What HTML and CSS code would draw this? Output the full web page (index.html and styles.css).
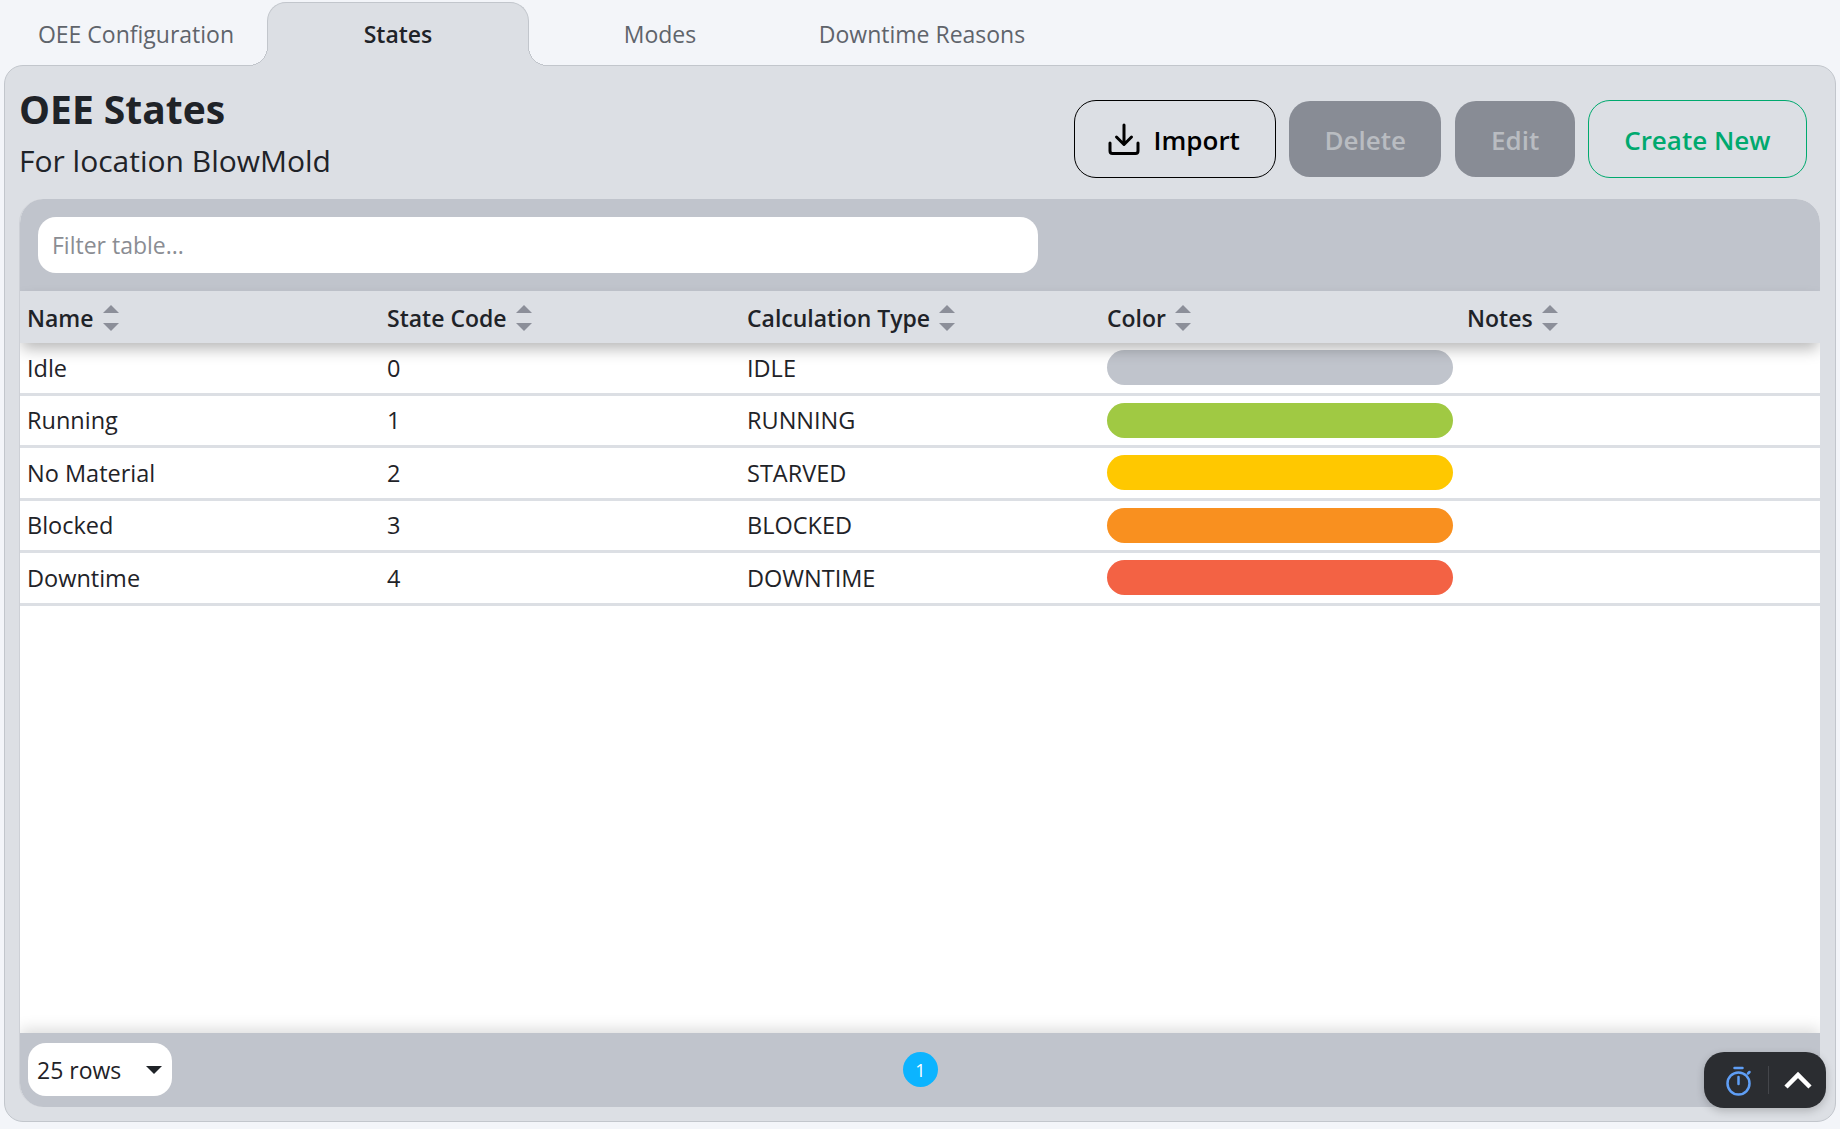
FILE: index.html

```html
<!DOCTYPE html>
<html lang="en">
<head>
    <meta charset="UTF-8" />
    <meta name="viewport" content="width=device-width, initial-scale=1.0" />
    <title>OEE States</title>
    <link rel="stylesheet" href="styles.css">
</head>
<body>
    <nav class="tabs">
        <a class="tab">OEE Configuration</a>
        <a class="tab tab-active">States</a>
        <a class="tab">Modes</a>
        <a class="tab">Downtime Reasons</a>
    </nav>
    <main class="panel">
        <header class="panel-head">
            <div class="titles">
                <h1>OEE States</h1>
                <p>For location BlowMold</p>
            </div>
            <div class="actions">
                <button class="btn btn-outline">
                    <svg class="btn-icon" viewBox="0 0 32 32" fill="none" stroke="currentColor" stroke-width="3" stroke-linecap="round" stroke-linejoin="round">
                        <path d="M16 2v19M8.500 14l7.500 7.500 7.500-7.500" />
                        <path d="M2 20v8a2.500 2.500 0 0 0 2.500 2.500h23A2.500 2.500 0 0 0 30 28v-8" />
                    </svg>
                    Import
                </button>
                <button class="btn btn-disabled">Delete</button>
                <button class="btn btn-disabled">Edit</button>
                <button class="btn btn-create">Create New</button>
            </div>
        </header>
        <section class="table-wrap">
            <div class="filter-bar">
                <input class="filter" type="text" placeholder="Filter table..." />
            </div>
            <div class="row row-head">
                <div class="cell">Name <svg class="sort" viewBox="0 0 16 26"><path d="M8 0l8 8H0zM8 26L0 18h16z" /></svg></div>
                <div class="cell">State Code <svg class="sort" viewBox="0 0 16 26"><path d="M8 0l8 8H0zM8 26L0 18h16z" /></svg></div>
                <div class="cell">Calculation Type <svg class="sort" viewBox="0 0 16 26"><path d="M8 0l8 8H0zM8 26L0 18h16z" /></svg></div>
                <div class="cell">Color <svg class="sort" viewBox="0 0 16 26"><path d="M8 0l8 8H0zM8 26L0 18h16z" /></svg></div>
                <div class="cell">Notes <svg class="sort" viewBox="0 0 16 26"><path d="M8 0l8 8H0zM8 26L0 18h16z" /></svg></div>
            </div>
            <div class="table-body">
                <div class="row">
                    <div class="cell">Idle</div>
                    <div class="cell">0</div>
                    <div class="cell">IDLE</div>
                    <div class="cell"><span class="pill pill-idle"></span></div>
                    <div class="cell"></div>
                </div>
                <div class="row">
                    <div class="cell">Running</div>
                    <div class="cell">1</div>
                    <div class="cell">RUNNING</div>
                    <div class="cell"><span class="pill pill-running"></span></div>
                    <div class="cell"></div>
                </div>
                <div class="row">
                    <div class="cell">No Material</div>
                    <div class="cell">2</div>
                    <div class="cell">STARVED</div>
                    <div class="cell"><span class="pill pill-starved"></span></div>
                    <div class="cell"></div>
                </div>
                <div class="row">
                    <div class="cell">Blocked</div>
                    <div class="cell">3</div>
                    <div class="cell">BLOCKED</div>
                    <div class="cell"><span class="pill pill-blocked"></span></div>
                    <div class="cell"></div>
                </div>
                <div class="row">
                    <div class="cell">Downtime</div>
                    <div class="cell">4</div>
                    <div class="cell">DOWNTIME</div>
                    <div class="cell"><span class="pill pill-downtime"></span></div>
                    <div class="cell"></div>
                </div>
            </div>
            <footer class="table-foot">
                <div class="rows-select">25 rows <span class="caret"></span></div>
                <span class="page-dot">1</span>
            </footer>
        </section>
    </main>
    <div class="float-bar">
        <svg class="timer" viewBox="0 0 26 30" fill="none" stroke="currentColor" stroke-width="2.500" stroke-linecap="round">
            <circle cx="12.500" cy="17.500" r="11" />
            <path d="M12.500 11v7M8.500 2h8M22 7.500l1.500-1.500" />
        </svg>
        <span class="float-sep"></span>
        <svg class="chevron" viewBox="0 0 28 18" fill="none" stroke="currentColor" stroke-width="4.500">
            <path d="M2 16L14 4l12 12" />
        </svg>
    </div>
</body>
</html>
```

FILE: styles.css

```css
* {
    box-sizing: border-box;
}
body {
    margin: 0;
    height: 1129px;
    overflow: hidden;
    display: flex;
    flex-direction: column;
    background: #f3f5f9;
    color: #1f2328;
    font-family: "Open Sans", "Noto Sans", sans-serif;
    font-size: 23px;
}
.tabs {
    display: flex;
    height: 65px;
    padding: 2px 0 0 5px;
    position: relative;
    z-index: 1;
}
.tab {
    width: 262px;
    display: flex;
    align-items: center;
    justify-content: center;
    color: #5f646b;
}
.tab-active {
    position: relative;
    height: 64px;
    padding-bottom: 2px;
    background: #dcdfe4;
    color: #1f2328;
    font-weight: 600;
    border: 1px solid #c2c6cc;
    border-bottom: 0;
    border-radius: 19px 19px 0 0;
}
.tab-active::before,
.tab-active::after {
    content: "";
    position: absolute;
    bottom: 0;
    width: 19px;
    height: 19px;
}
.tab-active::before {
    left: -19px;
    background: radial-gradient(circle at 0 0, transparent 18px, #c2c6cc 18px, #c2c6cc 19px, #dcdfe4 19px);
}
.tab-active::after {
    right: -19px;
    background: radial-gradient(circle at 100% 0, transparent 18px, #c2c6cc 18px, #c2c6cc 19px, #dcdfe4 19px);
}
.panel {
    height: 1057px;
    margin: 0 4px 0 4px;
    padding: 0 15px 14px 14px;
    display: flex;
    flex-direction: column;
    background: #dcdfe4;
    border: 1px solid #c2c6cc;
    border-radius: 19px;
}
.panel-head {
    height: 133px;
    display: flex;
    align-items: flex-start;
    justify-content: space-between;
    padding: 0 13px 0 0;
}
h1 {
    margin: 0;
    padding-top: 18px;
    font-size: 39px;
    line-height: 50px;
    font-weight: 700;
}
.titles p {
    margin: 0;
    padding-top: 5px;
    font-size: 30px;
    line-height: 44px;
}
.actions {
    display: flex;
    gap: 12px;
    padding-top: 34px;
}
.btn {
    height: 78px;
    padding: 2px 35.500px 0;
    display: flex;
    align-items: center;
    gap: 14px;
    font-family: inherit;
    font-size: 26px;
    font-weight: 600;
    border: 1px solid transparent;
    border-radius: 22px;
    background: transparent;
}
.btn-icon {
    width: 32px;
    height: 32px;
    margin-top: -2px;
}
.btn-outline {
    padding: 2px 35px 0 33px;
    color: #000;
    border-color: #000;
}
.btn-disabled {
    background: #888c95;
    background-clip: padding-box;
    color: #b9bcc1;
}
.btn-create {
    color: #00a96e;
    border-color: #00a96e;
}
.table-wrap {
    flex: 1;
    display: flex;
    flex-direction: column;
    background: #fff;
    border-left: 1px solid #cdd0d6;
    border-radius: 24px;
    overflow: hidden;
}
.filter-bar {
    height: 92px;
    padding: 18px;
    background: #c0c4cc;
}
.filter {
    display: block;
    width: 1000px;
    height: 56px;
    padding: 0 14px;
    border: 0;
    border-radius: 18px;
    background: #fff;
    font-family: inherit;
    font-size: 23px;
    outline: none;
}
.filter::placeholder {
    color: #8a8d93;
}
.row {
    display: grid;
    grid-template-columns: repeat(5, 1fr);
    height: 52.600px;
    border-bottom: 3px solid #dcdfe4;
}
.cell {
    padding: 0 7px;
    display: flex;
    align-items: center;
    gap: 9px;
    min-width: 0;
    height: 49px;
}
.row-head {
    position: relative;
    z-index: 1;
    height: 52px;
    border-bottom: 0;
    background: #dcdfe4;
    box-shadow: 0 8px 14px -2px rgba(0, 0, 0, 0.28);
    font-weight: 600;
}
.row-head .cell {
    padding-top: 1px;
    height: 52px;
}
.sort {
    width: 16px;
    height: 26px;
    fill: #8c8f99;
}
.table-body {
    flex: 1;
    font-size: 23.500px;
}
.pill {
    display: block;
    width: 100%;
    height: 35px;
    border-radius: 18px;
}
.pill-idle { background: #c0c4cc; }
.pill-running { background: #a0c943; }
.pill-starved { background: #ffc800; }
.pill-blocked { background: #f9901f; }
.pill-downtime { background: #f36244; }
.table-foot {
    position: relative;
    height: 74px;
    padding: 10px 8px 0;
    background: #c0c4cc;
    box-shadow: 0 -4px 14px rgba(0, 0, 0, 0.14);
}
.rows-select {
    width: 144px;
    height: 53px;
    padding: 0 10px 0 9px;
    display: flex;
    align-items: center;
    justify-content: space-between;
    background: #fff;
    border-radius: 18px;
}
.caret {
    width: 0;
    height: 0;
    border-left: 8px solid transparent;
    border-right: 8px solid transparent;
    border-top: 8px solid #1f2328;
}
.page-dot {
    position: absolute;
    left: 883px;
    top: 19px;
    width: 35px;
    height: 35px;
    display: flex;
    align-items: center;
    justify-content: center;
    border-radius: 50%;
    background: #0cb4ff;
    color: #fff;
    font-size: 18px;
}
.float-bar {
    position: fixed;
    right: 14px;
    bottom: 21px;
    width: 122px;
    height: 56px;
    display: flex;
    align-items: center;
    background: #2b2d31;
    border-radius: 20px;
    box-shadow: 0 3px 8px rgba(0, 0, 0, 0.2);
}
.timer {
    width: 26px;
    height: 30px;
    margin: 2px 0 0 22px;
    color: #5f9ef5;
}
.float-sep {
    width: 1px;
    height: 28px;
    margin-left: 16px;
    background: #44464b;
}
.chevron {
    width: 28px;
    height: 18px;
    margin-left: 15px;
    color: #fff;
}
```
